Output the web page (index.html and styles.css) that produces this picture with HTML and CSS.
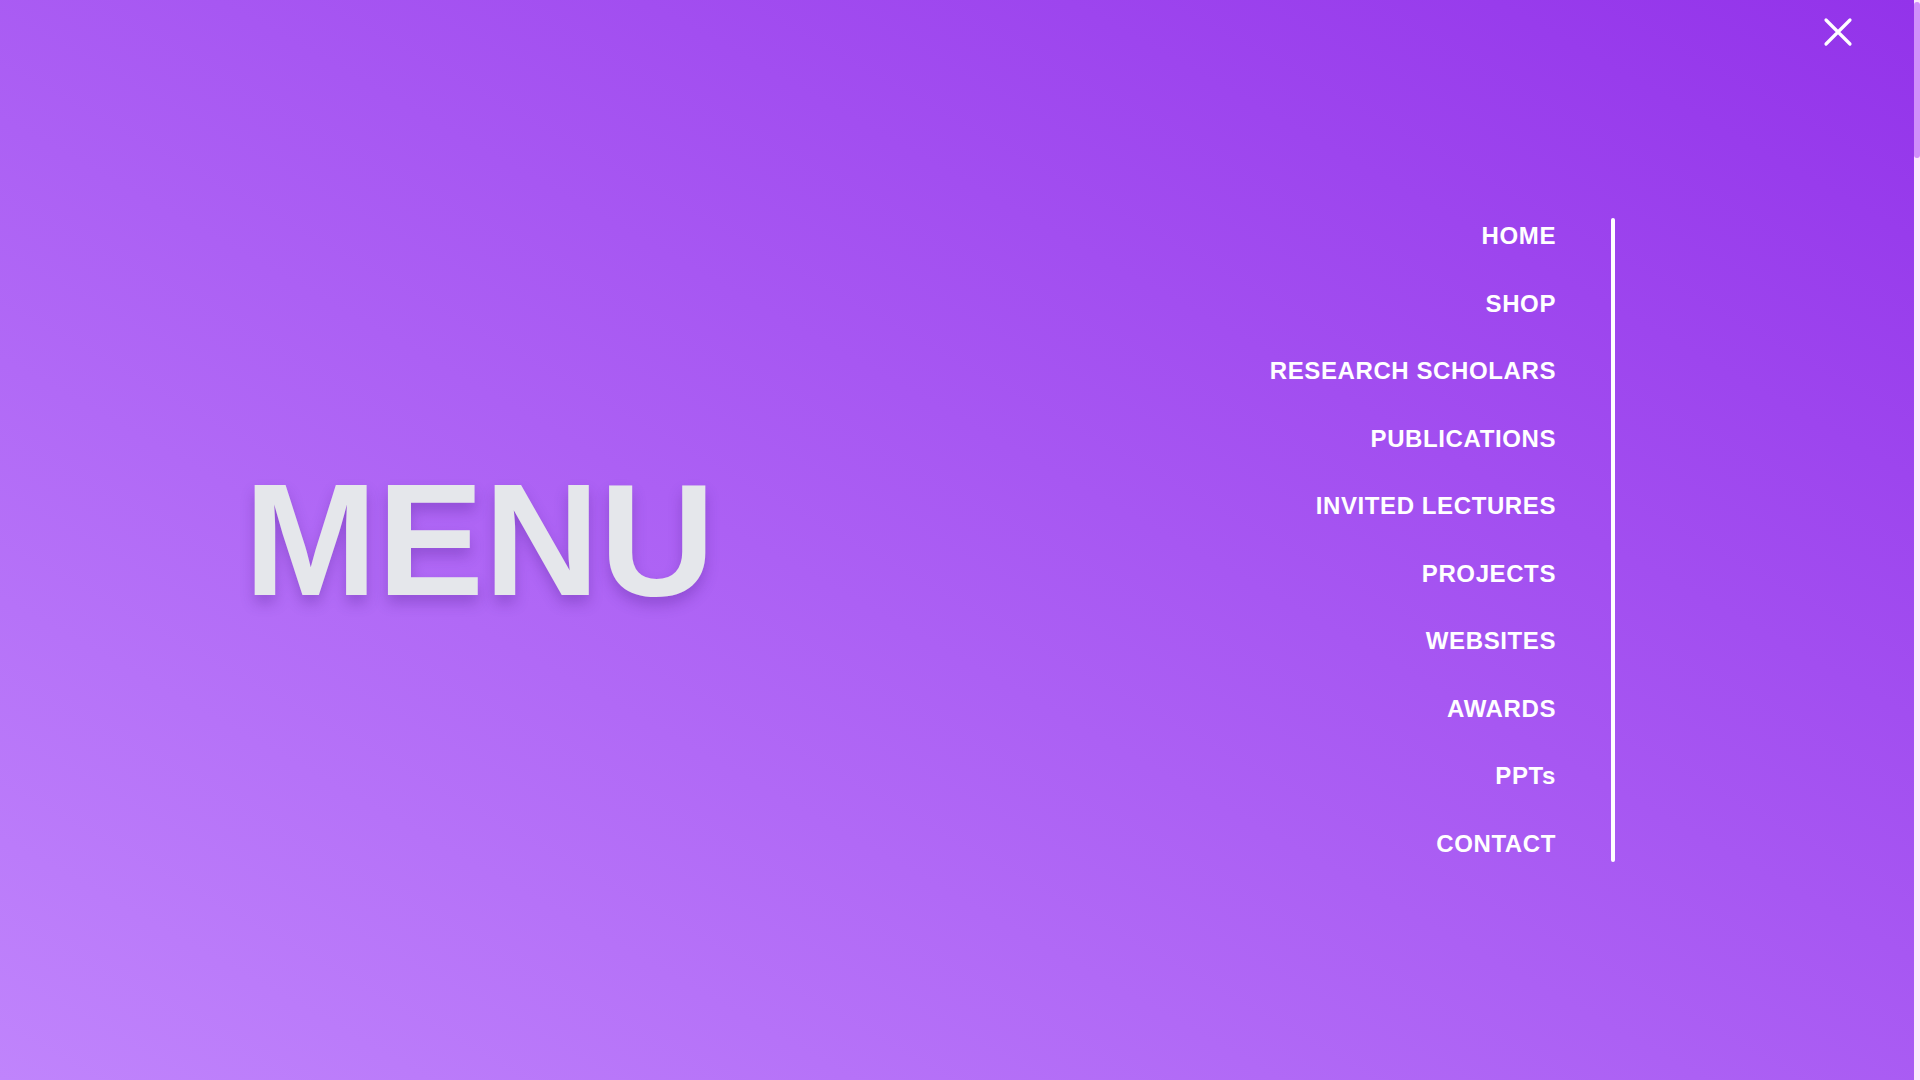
FILE: index.html
```html
<!DOCTYPE html>
<html lang="en">
<head>
<meta charset="utf-8">
<title>Menu</title>
<link rel="stylesheet" href="styles.css">
</head>
<body>
<div class="screen">
  <div class="overlay">
    <button class="close" aria-label="Close menu">
      <svg class="close-icon" viewBox="0 0 24 24" fill="none" stroke="currentColor" stroke-width="1.6" stroke-linecap="round" stroke-linejoin="round"><path d="M6 18L18 6M6 6l12 12"/></svg>
    </button>
    <h1 class="title">MENU</h1>
    <nav class="nav">
      <ul class="nav-list">
        <li><a href="#">HOME</a></li>
        <li><a href="#">SHOP</a></li>
        <li><a href="#">RESEARCH SCHOLARS</a></li>
        <li><a href="#">PUBLICATIONS</a></li>
        <li><a href="#">INVITED LECTURES</a></li>
        <li><a href="#">PROJECTS</a></li>
        <li><a href="#">WEBSITES</a></li>
        <li><a href="#">AWARDS</a></li>
        <li><a href="#">PPTs</a></li>
        <li><a href="#">CONTACT</a></li>
      </ul>
      <span class="nav-bar"></span>
    </nav>
  </div>
  <div class="scrollbar"><div class="scroll-thumb"></div></div>
</div>
</body>
</html>
```

FILE: styles.css
```css
html, body {
  margin: 0;
  padding: 0;
  width: 100%;
  height: 100%;
  overflow: hidden;
}

body {
  font-family: "Liberation Sans", Arial, sans-serif;
}

.screen {
  display: flex;
  width: 1920px;
  height: 1080px;
}

.overlay {
  position: relative;
  flex: 1;
  display: flex;
  align-items: center;
  justify-content: space-between;
  padding: 0 299px 0 244px;
  background: linear-gradient(to top right, #c084fc, #9333ea);
}

.close {
  position: absolute;
  top: 8px;
  right: 52px;
  width: 48px;
  height: 48px;
  padding: 0;
  border: 0;
  background: none;
  color: #ffffff;
  cursor: pointer;
}

.close-icon {
  display: block;
  width: 48px;
  height: 48px;
}

.title {
  margin: 0;
  font-size: 160px;
  line-height: 1;
  font-weight: 700;
  color: #e5e7eb;
  text-shadow: 0 8px 14px rgba(70, 20, 130, 0.28);
}

.nav {
  display: flex;
  align-items: stretch;
  gap: 55px;
}

.nav-list {
  list-style: none;
  margin: 0;
  padding: 2px 0;
  display: flex;
  flex-direction: column;
  gap: 35.56px;
  text-align: right;
}

.nav-list li {
  font-size: 24px;
  line-height: 32px;
  height: 32px;
}

.nav-list a {
  color: #ffffff;
  text-decoration: none;
  font-weight: 700;
  letter-spacing: 0.6px;
}

.nav-bar {
  width: 4px;
  background: #ffffff;
  border-radius: 2px;
}

.scrollbar {
  width: 6px;
  height: 100%;
  background: #fce8fb;
  display: flex;
  flex-direction: column;
  padding-top: 2px;
  box-sizing: border-box;
}

.scroll-thumb {
  height: 156px;
  background: #d08ffa;
  border-radius: 3px;
}
```
